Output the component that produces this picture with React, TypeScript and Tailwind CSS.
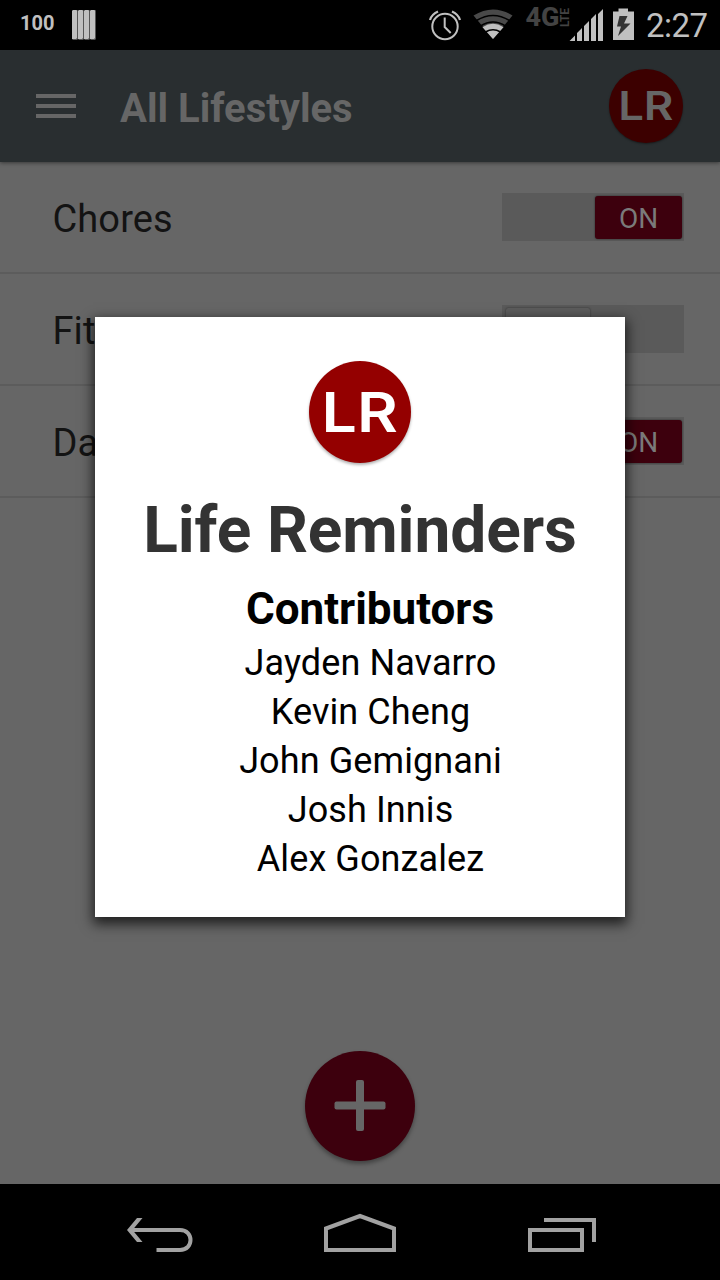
import React from "react";

function StatusBar() {
  return (
    <header className="flex h-[50px] shrink-0 items-center bg-black text-[#c0c0c0]">
      <span className="ml-[20px] w-[52px] pb-[4px] text-[20px] font-bold leading-none text-[#c0c0c0]">100</span>
      <svg width="24" height="30" viewBox="0 0 24 30">
        {[0, 6, 12, 18].map((x) => (
          <g key={x}>
            <path d={`M${x} 1l1-1h4.500l.5 1v28l-1 1h-4l-1-1z`} fill="#555" />
            <path d={`M${x} 1l1-1h3.500l.5 1v27l-1 1h-4z`} fill="#c0c0c0" />
          </g>
        ))}
      </svg>
      <svg className="ml-auto" width="221" height="50" viewBox="0 0 221 50">
        <g fill="none" stroke="#c0c0c0" strokeWidth="2">
          <circle cx="20" cy="26.500" r="12.700" />
          <path d="M19.700 17.500v9.500l6 6" />
          <path d="M5 20q1.500-5.500 8-8.500M35 20q-1.500-5.500-8-8.500" strokeWidth="2.200" />
        </g>
        <path d="M48.500 15.500Q68 3.500 87.500 15.500L68 39z" fill="#494949" />
        <path d="M57.500 27.200Q68 20.500 78.500 27.200L68 39z" fill="#c0c0c0" />
        <g fill="none" stroke="#000" strokeWidth="1.500">
          <path d="M51.500 20.500Q68 10.500 84.500 20.500M55.500 26Q68 18 80.500 26M60.500 32Q68 27.500 75.500 32" />
        </g>
        <g fill="#434343" fontFamily="Roboto, sans-serif">
          <text x="100.500" y="26" fontSize="25" fontWeight="800" textLength="34" lengthAdjust="spacingAndGlyphs">4G</text>
          <text transform="translate(144 27) rotate(-90)" fontSize="12" fontWeight="600" textLength="19" lengthAdjust="spacingAndGlyphs">LTE</text>
        </g>
        <g fill="#c0c0c0">
          <path d="M144.500 41l5.500-5.500v5.500zM152 41v-8l5-5v13zM159 41v-15l5-5v20zM166 41v-22l5-5v27zM173 41v-27l5-5v32z" />
          <path d="M188 11.500h5.500v-3h9.500v3h6v28.500h-21v-28.500z" />
        </g>
        <path d="M194.500 16h8l-3.500 7.500h6.500l-12.500 12.500 3-9.500h-4z" fill="#333" />
      </svg>
      <time className="mr-[12px] w-[62px] whitespace-nowrap pt-[1px] text-[33px] leading-none tracking-[-0.5px]">2:27</time>
    </header>
  );
}

function Logo({ className }: { className: string }) {
  return (
    <svg viewBox="0 0 101 101" className={className} role="img" aria-label="Life Reminders">
      <text
        x="12.500"
        y="70"
        fontFamily="Inter, sans-serif"
        fontWeight="600"
        fontSize="54"
        textLength="75.500"
        lengthAdjust="spacingAndGlyphs"
        fill="currentColor"
      >
        LR
      </text>
    </svg>
  );
}

function AppBar() {
  return (
    <div className="z-10 flex h-[112px] shrink-0 items-center bg-[#292e30] pl-[36px] pr-[37px] text-[#666] shadow-[0_1px_4px_rgba(0,0,0,0.45)]">
      <div className="flex w-[40px] flex-col gap-[6px]">
        <i className="h-[4px] bg-[#666]" />
        <i className="h-[4px] bg-[#666]" />
        <i className="h-[4px] bg-[#666]" />
      </div>
      <h1 className="ml-[44px] pt-[6px] text-[40px] font-bold leading-none">All Lifestyles</h1>
      <Logo className="ml-auto h-[74px] w-[74px] rounded-full bg-[#3c0000] text-[#666] shadow-[0_1px_2px_rgba(0,0,0,0.4)]" />
    </div>
  );
}

function Row({ name, on }: { name: string; on: boolean }) {
  return (
    <li className="flex h-[112px] items-center justify-between border-b-2 border-[#5c5c5c] pl-[52.5px] pr-[36px]">
      <span className="pt-[4px] text-[38px] leading-none tracking-[0.1px] text-[#131313]">{name}</span>
      <div className={`flex h-[48px] w-[182px] items-center bg-[#5a5a5a] px-[2px] ${on ? "justify-end" : "justify-start"}`}>
        {on ? (
          <div className="flex h-[43px] w-[87px] items-center justify-center rounded-[3px] bg-[#3d000d] pt-[4px] text-[28px] leading-none text-[#7a7a7a] shadow-[0_0_2px_rgba(0,0,0,0.6)]">
            ON
          </div>
        ) : (
          <div className="ml-[2px] h-[42px] w-[84px] rounded-[2px] bg-[#5c5c5c] shadow-[0_0_2px_rgba(0,0,0,0.5)]" />
        )}
      </div>
    </li>
  );
}

function AboutDialog() {
  const people = ["Jayden Navarro", "Kevin Cheng", "John Gemignani", "Josh Innis", "Alex Gonzalez"];
  return (
    <section
      role="dialog"
      className="absolute left-[95px] top-[317px] z-20 flex h-[600px] w-[530px] flex-col items-center bg-white pt-[44px] shadow-[0_5px_12px_2px_rgba(0,0,0,0.7)]"
    >
      <Logo className="h-[102px] w-[102px] shrink-0 rounded-full bg-[#940000] text-white shadow-[0_2px_3px_rgba(0,0,0,0.3)]" />
      <h2 className="mt-[30px] whitespace-nowrap text-[64px] font-bold leading-[75px] tracking-[-0.1px] text-[#333]">Life Reminders</h2>
      <h3 className="ml-[20px] mt-[13px] text-[44px] font-bold leading-[57px] text-black">Contributors</h3>
      <ul className="ml-[21px] mt-[1px] text-center text-[36px] leading-[49px] tracking-[0.1px] text-black">
        {people.map((p) => (
          <li key={p}>{p}</li>
        ))}
      </ul>
    </section>
  );
}

function NavBar() {
  return (
    <nav className="flex h-[96px] shrink-0 items-center bg-black pl-[126px]">
      <svg width="68" height="96" viewBox="0 0 68 96">
        <path d="M30.500 66H54C68 66 68 46 54 46H4" fill="none" stroke="#a2a2a2" strokeWidth="4" />
        <path d="M1 46L11 34h5.500L6.500 46L16.500 58H11Z" fill="#a2a2a2" />
      </svg>
      <svg className="ml-[130px]" width="72" height="96" viewBox="0 0 72 96" fill="none" stroke="#a2a2a2" strokeWidth="4">
        <path d="M2 66V44.500L36 32L70 44.500V66Z" />
      </svg>
      <svg className="ml-[132px]" width="69" height="96" viewBox="0 0 69 96" fill="none" stroke="#a2a2a2" strokeWidth="4">
        <path d="M2 46h52v20H2zM16 36h50v22" />
      </svg>
    </nav>
  );
}

export default function App() {
  return (
    <div className="relative flex h-[1280px] w-[720px] flex-col overflow-hidden bg-[#666] font-[Roboto,sans-serif]">
      <StatusBar />
      <AppBar />
      <main className="flex flex-1 flex-col">
        <ul>
          <Row name="Chores" on />
          <Row name="Fitness" on={false} />
          <Row name="Daily" on />
        </ul>
        <button
          aria-label="Add"
          className="mx-auto mb-[23px] mt-auto flex h-[110px] w-[110px] items-center justify-center rounded-full bg-[#3d000d] shadow-[0_3px_4px_rgba(0,0,0,0.35)]"
        >
          <svg width="52" height="52" viewBox="0 0 52 52" fill="#666">
            <rect x="22" y="0" width="8" height="51" rx="2" />
            <rect x="0.500" y="21.500" width="51" height="8" rx="2" />
          </svg>
        </button>
      </main>
      <NavBar />
      <AboutDialog />
    </div>
  );
}
